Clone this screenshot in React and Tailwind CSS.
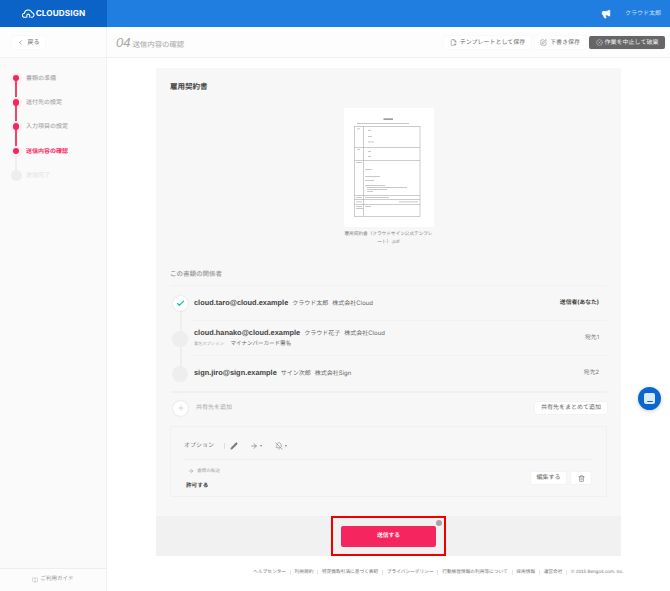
import React from "react";
import { ChevronLeft, Megaphone, FilePlus2, SquarePen, CircleX, Pencil, ArrowRight, BellOff, Trash2, Plus, Check, BookOpen } from "lucide-react";

const jp = "font-['Inter','Noto_Sans_CJK_JP',sans-serif]";

function Step({ label, state, last }) {
  const textCls = state === "current" ? "text-[#f5265f] font-bold" : state === "todo" ? "text-[#e2e2e2]" : "text-[#a9a9a9] font-medium";
  return (
    <div className="flex items-center h-[24.3px] relative">
      <div className="w-[26px] pl-[10.5px] shrink-0">
        {state === "todo" ? (
          <div className="w-[11px] h-[11px] rounded-full bg-[#eeeeee]" />
        ) : (
          <div className="w-[11px] h-[11px] rounded-full bg-[#f1f1f1] flex items-center justify-center">
            <div className="relative z-10 w-[6.5px] h-[6.5px] rounded-full bg-[#f5265f]" />
          </div>
        )}
      </div>
      {!last && (
        <div className={`absolute left-[15px] top-[12px] w-[2px] h-[25px] ${state === "current" ? "bg-[#eeeeee]" : "bg-[#f5426f]"}`} />
      )}
      <span className={`text-[6px] leading-[7px] ${textCls}`}>{label}</span>
    </div>
  );
}

function Btn({ children, className = "" }) {
  return (
    <div className={`h-[12.5px] bg-white rounded-[2px] flex items-center justify-center text-[6px] leading-none text-[#666] shadow-[0_0_2px_rgba(0,0,0,0.07)] ${className}`}>
      {children}
    </div>
  );
}

function Doc() {
  return (
    <svg width="90" height="119" viewBox="0 0 90 119" className="block">
      <rect width="90" height="119" fill="#ffffff" />
      <rect x="39.5" y="10.5" width="9.5" height="1.2" fill="#777" />
      <rect x="13" y="15" width="52" height="0.8" fill="#bbb" />
      <rect x="10.5" y="18.5" width="65.5" height="90" fill="none" stroke="#aaa" strokeWidth="0.6" />
      <path d="M19.5 18.5V108.5M10.5 39.5H76M10.5 52.5H76M10.5 87.5H76M10.5 91.5H76M10.5 96.5H76" stroke="#aaa" strokeWidth="0.6" fill="none" />
      <g fill="#bbb">
        <rect x="13" y="20.5" width="3" height="0.8" />
        <rect x="24" y="22" width="3" height="0.8" />
        <rect x="24" y="28" width="4" height="0.8" />
        <rect x="24" y="33.5" width="6" height="0.8" />
        <rect x="13" y="41" width="3" height="0.8" />
        <rect x="24" y="43" width="3" height="0.8" />
        <rect x="24" y="48" width="3" height="0.8" />
        <rect x="12" y="54" width="6" height="0.8" />
        <rect x="21" y="61" width="7" height="0.8" />
        <rect x="21" y="68" width="15" height="0.8" />
        <rect x="21" y="72" width="9" height="0.8" />
        <rect x="21" y="77" width="20" height="0.8" />
        <rect x="23" y="79" width="40" height="0.8" />
        <rect x="23" y="81" width="20" height="0.8" />
        <rect x="23" y="83" width="6" height="0.8" />
        <rect x="12" y="89" width="6" height="0.8" />
        <rect x="21" y="89" width="24" height="0.8" />
        <rect x="12" y="93.5" width="6" height="0.8" />
        <rect x="55" y="93.5" width="19" height="0.8" />
        <rect x="12" y="98" width="6" height="0.8" />
        <rect x="12" y="100" width="7" height="0.8" />
        <rect x="21" y="98" width="6" height="0.8" />
      </g>
    </svg>
  );
}

function Person({ email, name, org, role, sub, strong, h, icon, last }) {
  return (
    <div className={`flex items-center ${h} ml-[21px] border-b ${last ? "border-transparent" : "border-[#f1f1f1]"} relative`}>
      {icon}
      <div className="flex-1 pl-[3px]">
        <div className="flex items-baseline gap-[4px]">
          <span className="font-['Liberation_Sans',sans-serif] font-bold text-[7.4px] leading-none text-[#444]">{email}</span>
          <span className="text-[6px] leading-none text-[#666]">{name}</span>
          <span className="text-[6px] leading-none text-[#666]">{org}</span>
        </div>
        {sub && (
          <div className="flex items-baseline gap-[6px] mt-[5px]">
            <span className="text-[4.2px] leading-none text-[#aaa]">署名オプション:</span>
            <span className="text-[5.5px] leading-none text-[#666]">{sub}</span>
          </div>
        )}
      </div>
      <span className={`pr-[8px] text-[5.8px] leading-none ${strong ? "font-bold text-[#444]" : "text-[#777]"}`}>{role}</span>
    </div>
  );
}

const footer = ["ヘルプセンター", "利用規約", "特定商取引法に基づく表記", "プライバシーポリシー", "行動履歴情報の利用等について", "採用情報", "運営会社"];

export default function App() {
  return (
    <div className={`relative w-[670px] h-[591px] overflow-hidden bg-white flex flex-col [text-rendering:geometricPrecision] antialiased ${jp}`}>
      <header className="flex h-[27px] bg-[#207ee0] shrink-0">
        <div className="w-[107px] bg-[#0b63c8] flex items-center justify-center gap-[1px]">
          <svg width="13" height="9" viewBox="0 0 13 9" fill="none" stroke="#fff" strokeWidth="1.1" strokeLinecap="round">
            <path d="M3.6 8.3H2.6A2 2 0 0 1 2.3 4.3 4 4 0 0 1 10 3.6 2.4 2.4 0 0 1 10.2 8.3H9.4" />
            <path d="M4.8 8.3V6.6A1.4 1.4 0 0 1 7.8 6.6V8.3" />
          </svg>
          <span className="font-['Inter',sans-serif] font-bold text-[8.2px] tracking-[0.1px] text-white leading-none">CLOUDSIGN</span>
        </div>
        <div className="flex-1 flex items-center justify-end pr-[9px]">
          <Megaphone size={10} strokeWidth={2} fill="#ffffff" className="text-white mr-[14px]" />
          <span className="text-[6px] leading-none text-[#cfe3f8]">クラウド太郎</span>
        </div>
      </header>

      <div className="flex h-[31px] shrink-0 bg-[#fdfdfd] border-b border-[#f1f1f1]">
        <div className="w-[107px] border-r border-[#f3f3f3] pl-[12px] pt-[1px] flex items-center">
          <Btn className="w-[33px] gap-[3px] text-[#555]">
            <ChevronLeft size={7} strokeWidth={2} />
            戻る
          </Btn>
        </div>
        <div className="flex-1 flex items-center pl-[9px] pr-[5px] pt-[1px]">
          <div className="flex items-baseline gap-[2px] flex-1">
            <span className="font-['Liberation_Sans',sans-serif] italic text-[13px] leading-none text-[#a5a5a5]">04</span>
            <span className="text-[7.4px] leading-none text-[#a5a5a5]">送信内容の確認</span>
          </div>
          <div className="flex items-center gap-[3.5px]">
            <Btn className="w-[87px] gap-[3px]">
              <FilePlus2 size={7} strokeWidth={1.6} />
              テンプレートとして保存
            </Btn>
            <Btn className="w-[51px] gap-[3px]">
              <SquarePen size={7} strokeWidth={1.6} />
              下書き保存
            </Btn>
            <Btn className="w-[76px] gap-[2px] !bg-[#666666] !text-[#eeeeee]">
              <CircleX size={7} strokeWidth={1.4} />
              作業を中止して破棄
            </Btn>
          </div>
        </div>
      </div>

      <div className="flex flex-1 min-h-0">
        <aside className="w-[107px] shrink-0 bg-[#fafafa] border-r border-[#f1f1f1] flex flex-col">
          <div className="flex-1 pt-[8px]">
            <Step label="書類の準備" state="done" />
            <Step label="送付先の設定" state="done" />
            <Step label="入力項目の設定" state="done" />
            <Step label="送信内容の確認" state="current" />
            <Step label="送信完了" state="todo" last />
          </div>
          <div className="h-[23px] border-t border-[#eeeeee] bg-[#fcfcfc] flex items-center justify-center gap-[2px] text-[5.5px] text-[#999] leading-none">
            <BookOpen size={6} strokeWidth={1.5} className="text-[#aaa]" />
            ご利用ガイド
          </div>
        </aside>

        <main className="flex-1 flex flex-col items-center pt-[10px]">
          <section className="w-[465px] bg-[#f7f7f7] shrink-0">
            <div className="px-[14px] pt-[15px]">
              <h1 className="text-[7.5px] font-bold leading-[8px] text-[#444]">雇用契約書</h1>
              <div className="flex flex-col items-center mt-[17px]">
                <Doc />
                <p className="w-[92px] mt-[4px] text-center text-[4.65px] leading-[7.5px] text-[#888]">雇用契約書（クラウドサイン公式テンプレート）.pdf</p>
              </div>
              <h2 className="text-[6.5px] font-medium leading-none text-[#999] mt-[25px] mb-[7.5px]">この書類の関係者</h2>

              <div className="border-t border-[#f1f1f1] relative">
                <div className="absolute left-[10px] top-[25px] w-[2px] h-[60px] bg-[#eeeeee]" />
                <Person
                  h="h-[35px]"
                  email="cloud.taro@cloud.example"
                  name="クラウド太郎"
                  org="株式会社Cloud"
                  role="送信者(あなた)"
                  strong
                  icon={
                    <div className="absolute -left-[18px] top-[10px] w-[15px] h-[15px] rounded-full bg-white shadow-[0_0_2px_rgba(0,0,0,0.15)] flex items-center justify-center">
                      <Check size={9} strokeWidth={3.5} className="text-[#1cc3b2]" />
                    </div>
                  }
                />
                <Person
                  h="h-[35px]"
                  email="cloud.hanako@cloud.example"
                  name="クラウド花子"
                  org="株式会社Cloud"
                  role="宛先1"
                  sub="マイナンバーカード署名"
                  icon={<div className="absolute -left-[19px] top-[9.5px] w-[16px] h-[16px] rounded-full bg-[#eeeeee]" />}
                />
                <Person
                  h="h-[35px]"
                  last
                  email="sign.jiro@sign.example"
                  name="サイン次郎"
                  org="株式会社Sign"
                  role="宛先2"
                  icon={<div className="absolute -left-[19px] top-[10px] w-[16px] h-[16px] rounded-full bg-[#eeeeee]" />}
                />
              </div>

              <div className="h-[2px] bg-[#f0f0f0]" />
              <div className="flex items-center h-[33px] pb-[3px]">
                <div className="w-[15px] h-[15px] ml-[3px] rounded-full bg-white shadow-[0_0_2px_rgba(0,0,0,0.15)] flex items-center justify-center">
                  <Plus size={8} strokeWidth={1.2} className="text-[#aaa]" />
                </div>
                <span className="ml-[8px] flex-1 text-[6px] leading-none text-[#aaa]">共有先を追加</span>
                <Btn className="w-[72px]">共有先をまとめて追加</Btn>
              </div>

              <div className="h-[71px] border border-[#f0f0f0] px-[13px]">
                <div className="h-[33px] pt-[5px] flex items-center border-b border-[#eeeeee]">
                  <span className="text-[6px] leading-none text-[#777] w-[40px]">オプション</span>
                  <div className="h-[6px] w-px bg-[#ddd]" />
                  <Pencil size={8} fill="#777" strokeWidth={1} className="ml-[5px] text-[#777]" />
                  <ArrowRight size={8} strokeWidth={2} className="ml-[12px] text-[#777]" />
                  <div className="ml-[2px] w-0 h-0 border-x-[1.5px] border-x-transparent border-t-[2px] border-t-[#888]" />
                  <BellOff size={8} strokeWidth={1.6} className="ml-[13px] text-[#777]" />
                  <div className="ml-[2px] w-0 h-0 border-x-[1.5px] border-x-transparent border-t-[2px] border-t-[#888]" />
                </div>
                <div className="flex items-center justify-between h-[36px] pl-[2px] pr-[2px]">
                  <div>
                    <div className="flex items-center gap-[3px] pl-[2px]">
                      <ArrowRight size={6} strokeWidth={2} className="text-[#888]" />
                      <span className="text-[4.6px] leading-[7px] pt-[1px] text-[#aaa]">書類の転送</span>
                    </div>
                    <div className="mt-[9px] text-[5.6px] font-bold leading-none text-[#444]">許可する</div>
                  </div>
                  <div className="flex items-center gap-[5px]">
                    <Btn className="w-[35px]">編集する</Btn>
                    <Btn className="w-[20px]">
                      <Trash2 size={7} strokeWidth={1.6} className="text-[#555]" />
                    </Btn>
                  </div>
                </div>
              </div>
            </div>

            <div className="mt-[19px] h-[40px] bg-[#f1f1f1] flex justify-center">
              <div className="relative w-[115px] h-[40px] border-[2px] border-[#ee0000] flex items-center justify-center">
                <div className="w-[95px] h-[21px] rounded-[2px] bg-[#f5265f] flex items-center justify-center text-[5.8px] font-bold leading-none text-[#ffeef2]">送信する</div>
                <div className="absolute right-[2px] top-[2px] w-[6px] h-[6px] rounded-full bg-[#a5a5a5]" />
              </div>
            </div>
          </section>

          <footer className="self-end mt-[14px] pr-[46px] flex items-center text-[4.7px] leading-none text-[#777]">
            {footer.map((t) => (
              <React.Fragment key={t}>
                <span>{t}</span>
                <span className="mx-[3.8px] h-[5px] w-px bg-[#e5e5e5]" />
              </React.Fragment>
            ))}
            <span className="font-['Liberation_Sans',sans-serif]">© 2015 Bengo4.com, Inc.</span>
          </footer>
        </main>
      </div>

      <div className="absolute left-[638px] top-[387px] w-[23px] h-[23px] rounded-full bg-[#0b66cf] shadow-[0_1px_4px_rgba(0,0,0,0.2)] flex items-center justify-center">
        <div className="w-[11px] h-[11px] rounded-[2px] bg-[#dbeafb] flex items-end justify-center pb-[2px]">
          <div className="w-[6px] h-[1.5px] rounded-b-full bg-[#0b66cf]" />
        </div>
      </div>
    </div>
  );
}
